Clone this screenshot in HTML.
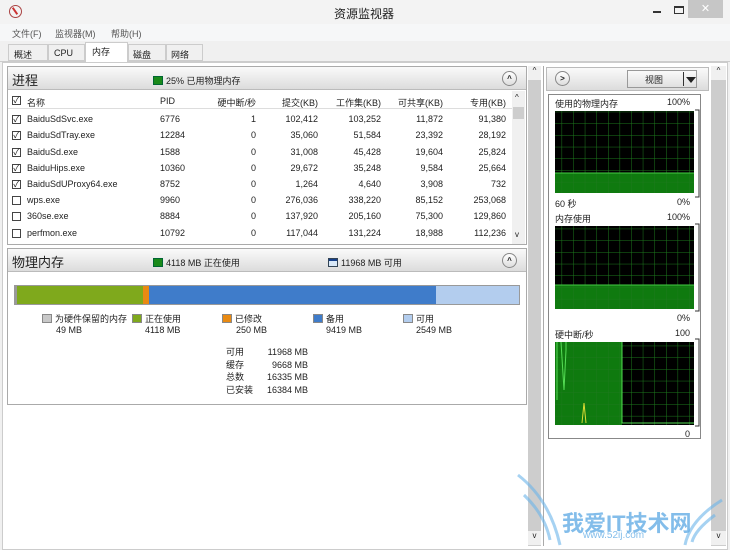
<!DOCTYPE html>
<html><head><meta charset="utf-8"><style>
*{margin:0;padding:0;box-sizing:border-box}
body{width:730px;height:550px;overflow:hidden;background:#f0f0f0;font-family:"Liberation Sans","Noto Sans CJK SC",sans-serif;font-size:9px;color:#222;position:relative}
.a{position:absolute;white-space:nowrap}
.r{text-align:right}
.hdr{background:linear-gradient(#fafafa,#dcdcdc);border-bottom:1px solid #bbb}
.cb{position:absolute;width:9px;height:9px;border:1px solid #444;background:#fff;font-size:9px;line-height:7px;text-align:center}
.btn{position:absolute;width:15px;height:15px;border-radius:50%;border:1px solid #888;background:linear-gradient(#fff,#ddd);font-size:8px;text-align:center;line-height:13px;font-weight:bold}
.sw{display:inline-block;width:10px;height:9px;vertical-align:-1px;margin-right:3px;border:1px solid #888}
</style></head><body>
<!-- title -->
<div class="a" style="left:0;top:0;width:730px;height:24px;background:#f3f3f3"></div>
<div class="a" style="left:9px;top:5px;width:13px;height:13px;border-radius:50%;border:1.5px solid #a44;"></div>
<div class="a" style="left:14px;top:7px;width:2px;height:8px;background:#c33;transform:rotate(-35deg)"></div>
<div class="a" style="left:334px;top:5px;font-size:12px">资源监视器</div>
<div class="a" style="left:653px;top:11px;width:8px;height:2px;background:#333"></div>
<div class="a" style="left:674px;top:6px;width:10px;height:8px;border:1px solid #333;border-top-width:2px"></div>
<div class="a" style="left:688px;top:0;width:35px;height:18px;background:#c6c6c6;color:#fff;text-align:center;font-size:11px;line-height:18px">✕</div>
<!-- menu -->
<div class="a" style="left:0;top:24px;width:730px;height:17px;background:#f6f7f8"></div>
<div class="a" style="left:12px;top:27px;color:#555">文件(F)</div>
<div class="a" style="left:55px;top:27px;color:#555">监视器(M)</div>
<div class="a" style="left:111px;top:27px;color:#555">帮助(H)</div>
<!-- tabs -->
<div class="a" style="left:0;top:61px;width:730px;height:1px;background:#ccc"></div>
<div class="a" style="left:8px;top:44px;width:40px;height:17px;border:1px solid #ccc;background:#f0f0f0;padding:3px 5px">概述</div>
<div class="a" style="left:48px;top:44px;width:37px;height:17px;border:1px solid #ccc;background:#f0f0f0;padding:3px 5px">CPU</div>
<div class="a" style="left:85px;top:42px;width:43px;height:20px;border:1px solid #ccc;border-bottom:none;background:#fff;padding:2px 6px">内存</div>
<div class="a" style="left:128px;top:44px;width:38px;height:17px;border:1px solid #ccc;background:#f0f0f0;padding:3px 4px">磁盘</div>
<div class="a" style="left:166px;top:44px;width:37px;height:17px;border:1px solid #ccc;background:#f0f0f0;padding:3px 4px">网络</div>
<div class="a" style="left:2px;top:62px;width:726px;height:488px;background:#fff;border:1px solid #ccc"></div>

<div class="a" style="left:7px;top:405px;width:521px;height:140px;background:#fff"></div>
<!-- process panel -->
<div class="a" style="left:7px;top:66px;width:520px;height:179px;border:1px solid #aaa;background:#fff"></div>
<div class="a hdr" style="left:8px;top:67px;width:518px;height:23px"></div>
<div class="a" style="left:12px;top:70px;font-size:13px">进程</div>
<div class="a" style="left:153px;top:74px"><span class="sw" style="background:#1a8a1a;border-color:#063"></span>25% 已用物理内存</div>
<div class="btn" style="left:502px;top:71px">^</div>
<div class="a" style="left:8px;top:91px;width:504px;height:18px;border-bottom:1px solid #ddd"></div>
<div class="cb" style="left:12px;top:96px">✓</div>
<div class="a" style="left:27px;top:96px">名称</div>
<div class="a" style="left:160px;top:96px">PID</div>
<div class="a r" style="left:200px;width:56px;top:96px">硬中断/秒</div>
<div class="a r" style="left:262px;width:56px;top:96px">提交(KB)</div>
<div class="a r" style="left:325px;width:56px;top:96px">工作集(KB)</div>
<div class="a r" style="left:387px;width:56px;top:96px">可共享(KB)</div>
<div class="a r" style="left:450px;width:56px;top:96px">专用(KB)</div>
<div class="a" style="left:512px;top:91px;width:13px;height:153px;background:#f0f0f0"></div>
<div class="a" style="left:513px;top:107px;width:11px;height:12px;background:#cdcdcd"></div>
<div class="a" style="left:515px;top:93px;font-size:8px">^</div>
<div class="a" style="left:515px;top:230px;font-size:8px">v</div>

<div class="cb" style="left:12px;top:115px">✓</div><div class="a" style="left:27px;top:114px">BaiduSdSvc.exe</div><div class="a" style="left:160px;top:114px">6776</div><div class="a r" style="left:200px;width:56px;top:114px">1</div><div class="a r" style="left:262px;width:56px;top:114px">102,412</div><div class="a r" style="left:325px;width:56px;top:114px">103,252</div><div class="a r" style="left:387px;width:56px;top:114px">11,872</div><div class="a r" style="left:450px;width:56px;top:114px">91,380</div>
<div class="cb" style="left:12px;top:131px">✓</div><div class="a" style="left:27px;top:130px">BaiduSdTray.exe</div><div class="a" style="left:160px;top:130px">12284</div><div class="a r" style="left:200px;width:56px;top:130px">0</div><div class="a r" style="left:262px;width:56px;top:130px">35,060</div><div class="a r" style="left:325px;width:56px;top:130px">51,584</div><div class="a r" style="left:387px;width:56px;top:130px">23,392</div><div class="a r" style="left:450px;width:56px;top:130px">28,192</div>
<div class="cb" style="left:12px;top:148px">✓</div><div class="a" style="left:27px;top:147px">BaiduSd.exe</div><div class="a" style="left:160px;top:147px">1588</div><div class="a r" style="left:200px;width:56px;top:147px">0</div><div class="a r" style="left:262px;width:56px;top:147px">31,008</div><div class="a r" style="left:325px;width:56px;top:147px">45,428</div><div class="a r" style="left:387px;width:56px;top:147px">19,604</div><div class="a r" style="left:450px;width:56px;top:147px">25,824</div>
<div class="cb" style="left:12px;top:164px">✓</div><div class="a" style="left:27px;top:163px">BaiduHips.exe</div><div class="a" style="left:160px;top:163px">10360</div><div class="a r" style="left:200px;width:56px;top:163px">0</div><div class="a r" style="left:262px;width:56px;top:163px">29,672</div><div class="a r" style="left:325px;width:56px;top:163px">35,248</div><div class="a r" style="left:387px;width:56px;top:163px">9,584</div><div class="a r" style="left:450px;width:56px;top:163px">25,664</div>
<div class="cb" style="left:12px;top:180px">✓</div><div class="a" style="left:27px;top:179px">BaiduSdUProxy64.exe</div><div class="a" style="left:160px;top:179px">8752</div><div class="a r" style="left:200px;width:56px;top:179px">0</div><div class="a r" style="left:262px;width:56px;top:179px">1,264</div><div class="a r" style="left:325px;width:56px;top:179px">4,640</div><div class="a r" style="left:387px;width:56px;top:179px">3,908</div><div class="a r" style="left:450px;width:56px;top:179px">732</div>
<div class="cb" style="left:12px;top:196px"></div><div class="a" style="left:27px;top:195px">wps.exe</div><div class="a" style="left:160px;top:195px">9960</div><div class="a r" style="left:200px;width:56px;top:195px">0</div><div class="a r" style="left:262px;width:56px;top:195px">276,036</div><div class="a r" style="left:325px;width:56px;top:195px">338,220</div><div class="a r" style="left:387px;width:56px;top:195px">85,152</div><div class="a r" style="left:450px;width:56px;top:195px">253,068</div>
<div class="cb" style="left:12px;top:212px"></div><div class="a" style="left:27px;top:211px">360se.exe</div><div class="a" style="left:160px;top:211px">8884</div><div class="a r" style="left:200px;width:56px;top:211px">0</div><div class="a r" style="left:262px;width:56px;top:211px">137,920</div><div class="a r" style="left:325px;width:56px;top:211px">205,160</div><div class="a r" style="left:387px;width:56px;top:211px">75,300</div><div class="a r" style="left:450px;width:56px;top:211px">129,860</div>
<div class="cb" style="left:12px;top:229px"></div><div class="a" style="left:27px;top:228px">perfmon.exe</div><div class="a" style="left:160px;top:228px">10792</div><div class="a r" style="left:200px;width:56px;top:228px">0</div><div class="a r" style="left:262px;width:56px;top:228px">117,044</div><div class="a r" style="left:325px;width:56px;top:228px">131,224</div><div class="a r" style="left:387px;width:56px;top:228px">18,988</div><div class="a r" style="left:450px;width:56px;top:228px">112,236</div>

<!-- memory panel -->
<div class="a" style="left:7px;top:248px;width:520px;height:157px;border:1px solid #aaa;background:#fff"></div>
<div class="a hdr" style="left:8px;top:249px;width:518px;height:23px"></div>
<div class="a" style="left:12px;top:252px;font-size:13px">物理内存</div>
<div class="a" style="left:153px;top:256px"><span class="sw" style="background:#1a8a1a;border-color:#063"></span>4118 MB 正在使用</div>
<div class="a" style="left:328px;top:256px"><span class="sw" style="background:linear-gradient(#16408a 30%,#d8e8f8 30%);border-color:#345"></span>11968 MB 可用</div>
<div class="btn" style="left:502px;top:253px">^</div>
<div class="a" style="left:14px;top:285px;width:506px;height:20px;border:1px solid #999;display:flex">
<div style="width:2px;background:#999"></div><div style="width:126px;background:#7fa91c"></div><div style="width:6px;background:#e98a12"></div><div style="width:287px;background:#3f7cca"></div><div style="flex:1;background:#b3cdee"></div></div>
<div class="a" style="left:42px;top:312px"><span class="sw" style="background:#c8c8c8"></span>为硬件保留的内存</div>
<div class="a" style="left:56px;top:325px">49 MB</div>
<div class="a" style="left:132px;top:312px"><span class="sw" style="background:#7fa91c"></span>正在使用</div>
<div class="a" style="left:145px;top:325px">4118 MB</div>
<div class="a" style="left:222px;top:312px"><span class="sw" style="background:#e98a12"></span>已修改</div>
<div class="a" style="left:236px;top:325px">250 MB</div>
<div class="a" style="left:313px;top:312px"><span class="sw" style="background:#3f7cca"></span>备用</div>
<div class="a" style="left:326px;top:325px">9419 MB</div>
<div class="a" style="left:403px;top:312px"><span class="sw" style="background:#b3cdee"></span>可用</div>
<div class="a" style="left:416px;top:325px">2549 MB</div>
<div class="a" style="left:226px;top:346px;line-height:12.7px">可用<br>缓存<br>总数<br>已安装</div>
<div class="a r" style="left:258px;width:50px;top:346px;line-height:12.7px">11968 MB<br>9668 MB<br>16335 MB<br>16384 MB</div>

<!-- left scrollbar -->
<div class="a" style="left:528px;top:66px;width:13px;height:480px;background:#cdcdcd"></div>
<div class="a" style="left:528px;top:66px;width:13px;height:14px;background:#f0f0f0;text-align:center;font-size:8px">^</div>
<div class="a" style="left:528px;top:531px;width:13px;height:14px;background:#f0f0f0;text-align:center;font-size:8px">v</div>

<!-- right panel -->
<div class="a" style="left:543px;top:66px;width:168px;height:480px;background:#fff;border-left:1px solid #aaa"></div>
<div class="a" style="left:546px;top:67px;width:163px;height:24px;background:linear-gradient(#fafafa,#dcdcdc);border:1px solid #bbb"></div>
<div class="btn" style="left:555px;top:71px">&gt;</div>
<div class="a" style="left:627px;top:70px;width:70px;height:18px;border:1px solid #999;background:linear-gradient(#fafafa,#e0e0e0)"></div>
<div class="a" style="left:645px;top:73px">视图</div>
<div class="a" style="left:683px;top:72px;width:1px;height:14px;background:#333"></div>
<div class="a" style="left:686px;top:77px;border-left:5px solid transparent;border-right:5px solid transparent;border-top:6px solid #222"></div>
<div class="a" style="left:548px;top:94px;width:153px;height:345px;border:1px solid #888"></div>
<div class="a" style="left:555px;top:97px">使用的物理内存</div><div class="a" style="left:667px;top:97px">100%</div>
<div class="a" style="left:555px;top:197px">60 秒</div><div class="a" style="left:677px;top:197px">0%</div>
<div class="a" style="left:555px;top:212px">内存使用</div><div class="a" style="left:667px;top:212px">100%</div>
<div class="a" style="left:677px;top:313px">0%</div>
<div class="a" style="left:555px;top:328px">硬中断/秒</div><div class="a" style="left:675px;top:328px">100</div>
<div class="a" style="left:685px;top:429px">0</div>
<svg class="a" style="left:550px;top:100px" width="150" height="340">
<defs><pattern id="g" width="11.6" height="11.7" patternUnits="userSpaceOnUse"><path d="M0 0H11.6M0 0V11.7" stroke="#1d7a1d" stroke-width="1" fill="none"/></pattern></defs>
<g fill="none" stroke="#333"><path d="M145 10h4v87h-4M145 124h4v87h-4M145 239h4v87h-4"/></g>
<rect x="5" y="11" width="139" height="82" fill="#000"/><rect x="5" y="73" width="139" height="20" fill="#0f7a0f"/><rect x="5" y="11" width="139" height="82" fill="url(#g)"/><line x1="5" y1="73" x2="144" y2="73" stroke="#4c4" />
<rect x="5" y="126" width="139" height="83" fill="#000"/><rect x="5" y="185" width="139" height="24" fill="#0f7a0f"/><rect x="5" y="126" width="139" height="83" fill="url(#g)"/><line x1="5" y1="185" x2="144" y2="185" stroke="#4c4"/>
<rect x="5" y="242" width="139" height="83" fill="#000"/><rect x="5" y="242" width="67" height="83" fill="#0f7a0f"/><rect x="5" y="242" width="139" height="83" fill="url(#g)"/>
<path d="M7 242V300M11 242L14 290 16 250V242M72 242V323H144" stroke="#5d5" fill="none"/><path d="M32 323L34 303 36 323" stroke="#dd3" fill="none"/>
</svg>
<!-- right scrollbar -->
<div class="a" style="left:711px;top:66px;width:15px;height:480px;background:#cdcdcd"></div>
<div class="a" style="left:711px;top:66px;width:15px;height:14px;background:#f0f0f0;text-align:center;font-size:8px">^</div>
<div class="a" style="left:711px;top:531px;width:15px;height:14px;background:#f0f0f0;text-align:center;font-size:8px">v</div>
<!-- watermark -->
<svg class="a" style="left:510px;top:470px" width="220" height="80"><g fill="none" stroke="#6ab4ea" stroke-width="3" opacity=".6"><path d="M8 5Q40 30 50 75M14 25Q35 45 40 70M212 30Q180 50 175 75M205 45Q185 60 182 72"/></g></svg>
<div class="a" style="left:562px;top:506px;font-size:22px;font-weight:bold;color:#5aa8e4;opacity:.75">我爱IT技术网</div>
<div class="a" style="left:583px;top:530px;font-size:10px;color:#5aa8e4;opacity:.75">www.52ij.com</div>
</body></html>
